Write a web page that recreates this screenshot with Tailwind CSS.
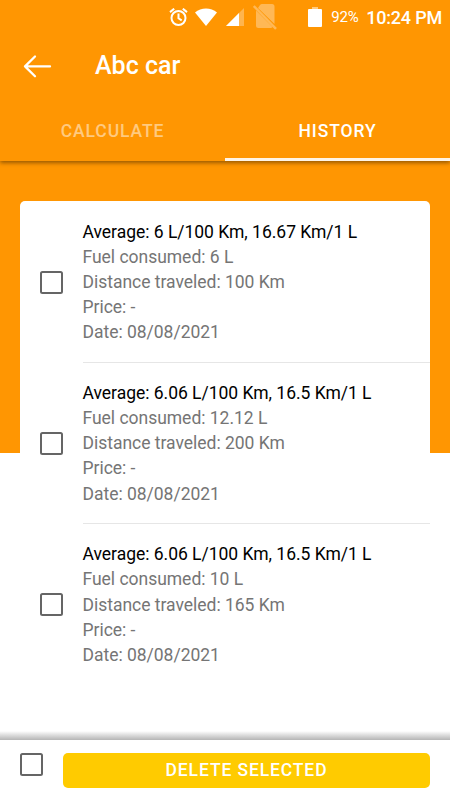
<!DOCTYPE html>
<html lang="en">
<head>
<meta charset="utf-8">
<title>Abc car</title>
<script src="https://cdn.jsdelivr.net/npm/@tailwindcss/browser@4"></script>
</head>
<body class="bg-white font-[Roboto,sans-serif]">
<div class="flex h-[800px] w-[450px] flex-col overflow-hidden bg-linear-to-b from-[#ff9602] from-[453.3px] to-white to-[453.3px]">
  <header class="relative z-10 h-[161px] shrink-0 bg-[#ff9602] text-white shadow-[0_2px_4px_rgba(0,0,0,0.4)]">
    <div class="flex h-[34px] items-center justify-end pr-2">
      <svg class="mr-[7px] h-[19px] w-[19px]" viewBox="0 0 19 19" fill="none" stroke="white" stroke-width="2"><circle cx="9.500" cy="10" r="7"/><path d="M9.500 5.500v4.800l3.200 2M1 4.100 5.200 .7M18 4.100 13.800 .7"/></svg>
      <svg class="mr-[9px] h-[18px] w-[22px]" viewBox="0 0 22 18" fill="white"><path d="M0 4.500C6-1 16-1 22 4.500L11 18Z"/></svg>
      <svg class="mr-[9px] h-[18px] w-[18px]" viewBox="0 0 18 18" fill="white"><path d="M18 0v18H0Z" fill-opacity=".3"/><path d="M13 5v13H0Z"/></svg>
      <svg class="mr-[31px] h-[26px] w-[24px]" viewBox="0 0 24 26"><g opacity=".33"><path fill="white" d="M9 0H19Q21.500 0 21.500 2.500V20L5 4 7 1Q7.800 0 9 0ZM3 6.500 19.500 23Q19 24 17.500 24H5.500Q3 24 3 21.500Z"/><path d="M.8 2 23 24.800" stroke="white" stroke-width="2.400"/></g></svg>
      <svg class="mr-[9px] h-5 w-[14px]" viewBox="0 0 14 20" fill="white"><path d="M4 0h6v2H4z" fill-opacity=".5"/><path d="M1 2h12q1 0 1 1v16q0 1-1 1H1q-1 0-1-1V3q0-1 1-1Z"/></svg>
      <span class="mr-[8px] w-[27px] whitespace-nowrap text-[15px] tracking-[-0.200px]">92%</span>
      <span class="whitespace-nowrap text-[18px] font-medium tracking-[-0.200px]">10:24 PM</span>
    </div>
    <div class="flex h-[64px] items-center pl-[23px]">
      <svg class="h-[24px] w-[30px]" viewBox="0 0 30 24" fill="none" stroke="white" stroke-width="2.300" stroke-linecap="round" stroke-linejoin="round"><path d="M12 2.500 2 12.400l10 9.900M2 12.400h25"/></svg>
      <h1 class="ml-[42px] text-[25px] font-medium">Abc car</h1>
    </div>
    <nav class="grid h-[63px] grid-cols-2 text-center text-[17.500px] font-medium leading-[67px] tracking-[0.880px]">
      <div class="text-white/50">CALCULATE</div>
      <div class="h-[63px] border-b-[3px] border-[#fff4e6]">HISTORY</div>
    </nav>
  </header>
  <main class="mx-5 mt-10 flex-1 rounded-t-[5px] bg-white pt-[0.500px] text-[17.500px] leading-[25.100px] tracking-[-0.020px] text-[#757575]">
    <section class="flex h-[161.200px] items-center pl-[20px]">
      <div class="h-[23px] w-[23px] rounded-[2.500px] border-[2px] border-[#656565]"></div>
      <div class="ml-[19.500px] flex h-full flex-1 flex-col border-b border-[#e6e6e6] pt-[18.500px]">
        <p class="text-black">Average: 6 L/100 Km, 16.67 Km/1 L</p><p>Fuel consumed: 6 L</p><p>Distance traveled: 100 Km</p><p>Price: -</p><p>Date: 08/08/2021</p>
      </div>
    </section>
    <section class="flex h-[161.200px] items-center pl-[20px]">
      <div class="h-[23px] w-[23px] rounded-[2.500px] border-[2px] border-[#656565]"></div>
      <div class="ml-[19.500px] flex h-full flex-1 flex-col border-b border-[#e6e6e6] pt-[18.500px]">
        <p class="text-black">Average: 6.06 L/100 Km, 16.5 Km/1 L</p><p>Fuel consumed: 12.12 L</p><p>Distance traveled: 200 Km</p><p>Price: -</p><p>Date: 08/08/2021</p>
      </div>
    </section>
    <section class="flex h-[161.200px] items-center pl-[20px]">
      <div class="h-[23px] w-[23px] rounded-[2.500px] border-[2px] border-[#656565]"></div>
      <div class="ml-[19.500px] flex h-full flex-1 flex-col pt-[18.500px]">
        <p class="text-black">Average: 6.06 L/100 Km, 16.5 Km/1 L</p><p>Fuel consumed: 10 L</p><p>Distance traveled: 165 Km</p><p>Price: -</p><p>Date: 08/08/2021</p>
      </div>
    </section>
  </main>
  <div class="h-[9px] shrink-0 bg-linear-to-b from-white to-[#b5b5b5]"></div>
  <footer class="flex h-[60px] shrink-0 items-start bg-white pl-5 pr-5 pt-[12.500px]">
    <div class="h-[23px] w-[23px] shrink-0 rounded-[2.500px] border-[2px] border-[#656565]"></div>
    <button class="ml-5 h-[35px] flex-1 rounded-[5px] bg-[#ffcb00] text-[17.500px] font-medium leading-[35px] tracking-[0.880px] text-white">DELETE SELECTED</button>
  </footer>
</div>
</body>
</html>
